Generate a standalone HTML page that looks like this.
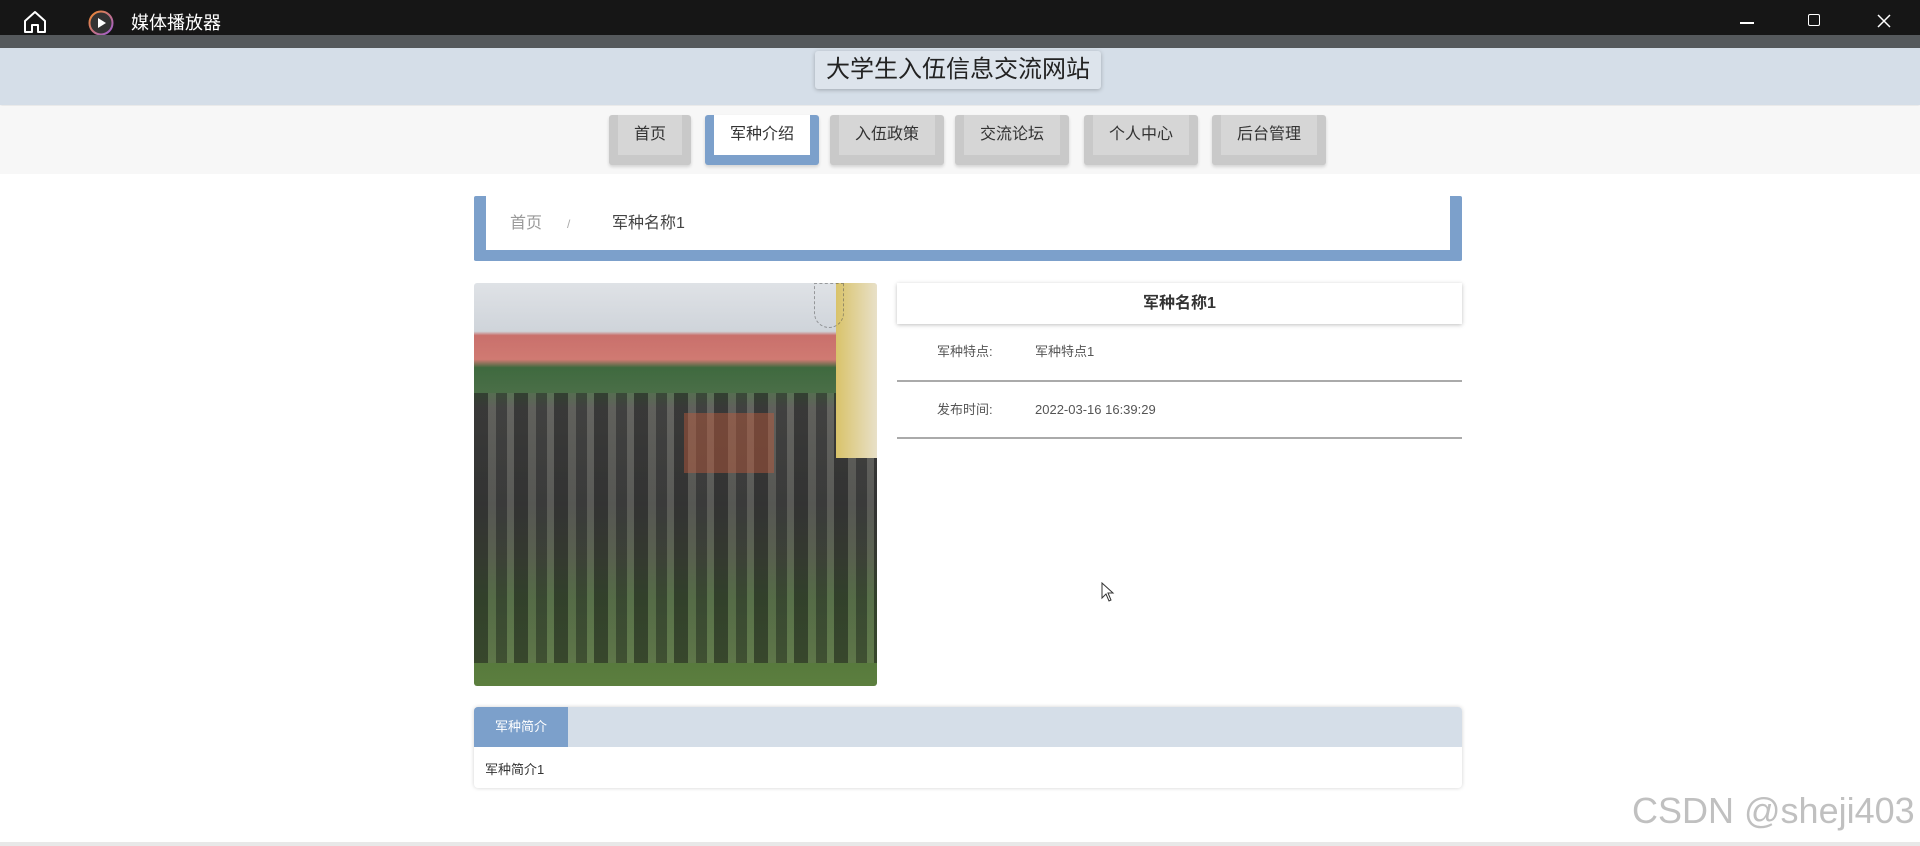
<!DOCTYPE html>
<html><head><meta charset="utf-8"><style>
*{margin:0;padding:0;box-sizing:border-box}
body{width:1920px;height:846px;overflow:hidden;background:#fff;font-family:"Liberation Sans","Noto Sans CJK SC",sans-serif;position:relative;color:#333}
.a{position:absolute}
.tb{left:0;top:0;width:1920px;height:35px;background:#161616;color:#fff}
.btn{position:absolute;top:115px;height:50px;background:#c9c9c9;border-radius:3px;box-shadow:0 2px 3px rgba(0,0,0,.15)}
.btn span{position:absolute;left:9px;right:9px;top:0;height:40px;background:#d6d6d6;text-align:center;line-height:40px;font-size:16px;color:#333}
.btn.on{background:#7ca0cb}.btn.on span{background:#fff}
</style></head><body>
<div class="a tb">
<svg class="a" style="left:22px;top:10px" width="26" height="24" viewBox="0 0 26 24"><path d="M3 11 L13 2 L23 11 V22 H16 V15 H10 V22 H3 Z" fill="none" stroke="#fff" stroke-width="2" stroke-linejoin="round"/></svg>
<svg class="a" style="left:88px;top:10px" width="26" height="26" viewBox="0 0 26 26"><defs><linearGradient id="g" x1="0" y1="0" x2="1" y2="1"><stop offset="0" stop-color="#f08a2c"/><stop offset="1" stop-color="#9b5bd6"/></linearGradient></defs><circle cx="13" cy="13" r="11.5" fill="#333" stroke="url(#g)" stroke-width="2"/><path d="M10 8 L18 13 L10 18Z" fill="#fff"/></svg>
<div class="a" style="left:131px;top:10px;font-size:18px;line-height:26px">媒体播放器</div>
<div class="a" style="left:1740px;top:22px;width:14px;height:1.5px;background:#fff"></div>
<div class="a" style="left:1808px;top:14px;width:12px;height:12px;border:1.5px solid #fff;border-radius:2px"></div>
<svg class="a" style="left:1877px;top:14px" width="14" height="14"><path d="M1 1L13 13M13 1L1 13" stroke="#fff" stroke-width="1.5"/></svg>
</div>
<div class="a" style="left:0;top:35px;width:1920px;height:13px;background:#55595c"></div>
<div class="a" style="left:0;top:48px;width:1920px;height:57px;background:#d5dee8;box-shadow:0 2px 3px rgba(0,0,0,.1)"></div>
<div class="a" style="left:815px;top:51px;width:286px;height:38px;background:#dde4ec;border-radius:3px;box-shadow:0 1px 4px rgba(0,0,0,.25);text-align:center;line-height:38px;font-size:24px;color:#222">大学生入伍信息交流网站</div>
<div class="a" style="left:0;top:106px;width:1920px;height:68px;background:#f7f7f7"></div>
<div class="btn" style="left:609px;width:82px"><span>首页</span></div>
<div class="btn on" style="left:705px;width:114px"><span>军种介绍</span></div>
<div class="btn" style="left:830px;width:114px"><span>入伍政策</span></div>
<div class="btn" style="left:955px;width:114px"><span>交流论坛</span></div>
<div class="btn" style="left:1084px;width:114px"><span>个人中心</span></div>
<div class="btn" style="left:1212px;width:114px"><span>后台管理</span></div>
<div class="a" style="left:474px;top:196px;width:988px;height:65px;border:12px solid #7ca0cb;border-top:0;border-bottom-width:11px;border-radius:2px;background:#fff"></div>
<div class="a" style="left:510px;top:213px;font-size:16px;color:#999;line-height:22px">首页</div>
<div class="a" style="left:567px;top:213px;font-size:12px;color:#aaa;line-height:22px">/</div>
<div class="a" style="left:612px;top:213px;font-size:16px;color:#444;line-height:22px">军种名称1</div>
<div class="a" style="left:474px;top:283px;width:403px;height:403px;border-radius:3px;overflow:hidden;background:linear-gradient(180deg,#dfe2e6 0%,#cfd4da 12%,#c9706c 13%,#d07a72 19%,#3f6a3f 21%,#4a6e47 27%,#5a5a58 31%,#4c4d4c 55%,#4f5a45 68%,#4a6a3a 78%,#5c7f3e 100%)">
<div class="a" style="left:0;top:110px;width:403px;height:270px;background:repeating-linear-gradient(90deg,rgba(30,30,30,.55) 0 14px,rgba(110,110,100,.3) 14px 22px,rgba(40,40,40,.5) 22px 33px,rgba(130,130,120,.25) 33px 40px)"></div>
<div class="a" style="left:210px;top:130px;width:90px;height:60px;background:rgba(190,90,60,.45)"></div>
<div class="a" style="left:362px;top:0;width:41px;height:175px;background:linear-gradient(90deg,#d9c36a,#e8e0c8)"></div>
<div class="a" style="left:340px;top:0;width:30px;height:45px;border:1px dashed rgba(80,80,80,.5);border-radius:0 0 20px 20px"></div>
</div>
<div class="a" style="left:897px;top:283px;width:565px;height:41px;background:#fff;box-shadow:0 1px 4px rgba(0,0,0,.25);text-align:center;line-height:41px;font-size:16px;font-weight:bold;color:#333">军种名称1</div>
<div class="a" style="left:937px;top:342px;font-size:13px;color:#555;line-height:20px">军种特点:</div>
<div class="a" style="left:1035px;top:342px;font-size:13px;color:#555;line-height:20px">军种特点1</div>
<div class="a" style="left:897px;top:380px;width:565px;height:2px;background:#aaa"></div>
<div class="a" style="left:937px;top:400px;font-size:13px;color:#555;line-height:20px">发布时间:</div>
<div class="a" style="left:1035px;top:400px;font-size:13px;color:#555;line-height:20px">2022-03-16 16:39:29</div>
<div class="a" style="left:897px;top:437px;width:565px;height:2px;background:#aaa"></div>
<div class="a" style="left:474px;top:707px;width:988px;height:81px;border-radius:4px;background:#fff;box-shadow:0 0 4px rgba(0,0,0,.18);overflow:hidden">
<div class="a" style="left:0;top:0;width:988px;height:40px;background:#d5dee8"></div>
<div class="a" style="left:0;top:0;width:94px;height:40px;background:#7ca0cb;color:#fff;font-size:13px;text-align:center;line-height:40px">军种简介</div>
<div class="a" style="left:11px;top:52px;font-size:13px;color:#333">军种简介1</div>
</div>
<svg class="a" style="left:1101px;top:582px" width="14" height="20"><path d="M1 1 V16 L5 12 L8 19 L10 18 L7 11 L12 11 Z" fill="#fff" stroke="#333"/></svg>
<div class="a" style="left:1632px;top:790px;font-size:36px;color:rgba(150,150,150,.6)">CSDN @sheji403</div>
<div class="a" style="left:0;top:842px;width:1920px;height:4px;background:#e8e8e8"></div>
</body></html>
